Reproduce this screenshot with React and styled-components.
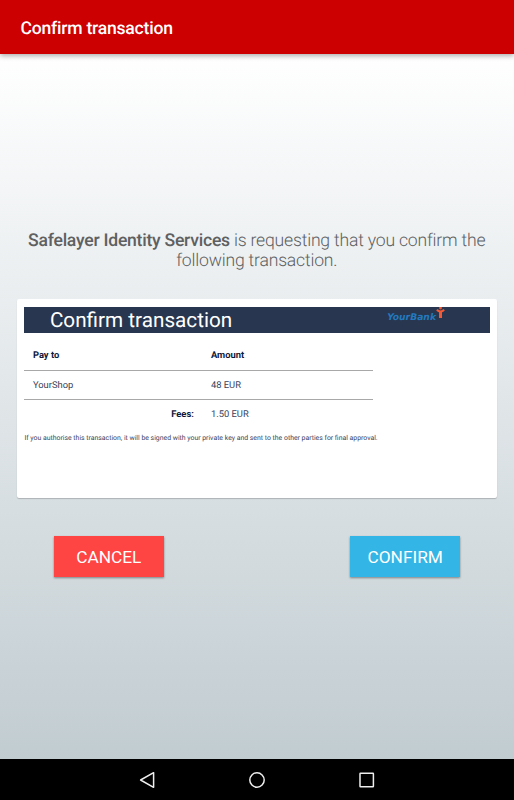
import React from 'react';
import styled, { createGlobalStyle } from 'styled-components';

const GlobalStyle = createGlobalStyle`
  * { box-sizing: border-box; }
  body { margin: 0; font-family: Roboto, sans-serif; text-rendering: geometricPrecision; }
`;

const Screen = styled.div`
  display: flex;
  flex-direction: column;
  width: 514px;
  height: 800px;
  overflow: hidden;
`;

const AppBar = styled.header`
  display: flex;
  align-items: center;
  flex: 0 0 54px;
  padding: 3px 20.5px 0;
  background: #cc0000;
  color: #fff;
  box-shadow: 0 2px 5px rgba(0, 0, 0, 0.32);
  z-index: 1;
`;

const AppTitle = styled.h1`
  margin: 0;
  font-size: 17.6px;
  font-weight: 500;
  line-height: 24px;
  letter-spacing: -0.24px;
`;

const Content = styled.main`
  display: flex;
  flex-direction: column;
  flex: 1;
  padding: 177px 17px 0 16.5px;
  background: linear-gradient(180deg, #ffffff 0%, #c1ccd1 100%);
`;

const Message = styled.p`
  margin: 0;
  text-align: center;
  font-size: 17.6px;
  font-weight: 300;
  line-height: 20px;
  letter-spacing: -0.2px;
  color: #5c6062;
  white-space: nowrap;

  strong { font-weight: 500; color: #5e6061; letter-spacing: -0.25px; }
`;

const Card = styled.section`
  height: 199px;
  margin-top: 28px;
  padding: 8px 7px 0 7.9px;
  border-radius: 2px;
  background: #fff;
  box-shadow: 0 1px 1px rgba(0, 0, 0, 0.2);
`;

const CardHeader = styled.div`
  display: flex;
  justify-content: space-between;
  height: 26px;
  padding: 0 45px 0 25.5px;
  background: #28374f;
  color: #fff;
`;

const CardTitle = styled.h2`
  margin: 0;
  font-size: 20.7px;
  font-weight: 400;
  line-height: 28px;
`;

const Logo = styled.div`
  display: flex;
  align-items: flex-start;
  height: 16px;
`;

const LogoName = styled.span`
  margin-top: 5px;
  font-family: 'DejaVu Sans', sans-serif;
  font-size: 9.2px;
  font-weight: 700;
  font-style: italic;
  line-height: 12px;
  color: #2379bf;
`;

const Table = styled.table`
  width: 349px;
  border-collapse: collapse;
  table-layout: fixed;
  margin-top: 8px;
  font-size: 9.4px;
  color: #39425a;
`;

const Row = styled.tr`
  height: 29px;
  border-bottom: ${({ $ruled }) => ($ruled ? '1px solid #a8a8a8' : 'none')};
`;

const Cell = styled.td`
  width: ${({ $width }) => $width || 'auto'};
  padding: 2px 8.5px 0;
  text-align: ${({ $align }) => $align || 'left'};
  font-weight: ${({ $strong }) => ($strong ? 700 : 400)};
  color: ${({ $strong }) => ($strong ? '#10183a' : 'inherit')};
  line-height: 12px;
`;

const Note = styled.p`
  margin: 5px 0 0;
  font-size: 6.88px;
  line-height: 10px;
  color: #39425a;
  white-space: nowrap;
`;

const Actions = styled.div`
  display: flex;
  justify-content: space-between;
  padding: 0 37px 0 37.5px;
  margin-top: 38px;
`;

const ActionButton = styled.button`
  width: 109.6px;
  height: 41px;
  padding: 1px 0 0;
  border: 0;
  background: ${({ $color }) => $color};
  color: #fff;
  font: 400 17.3px/24px Roboto, sans-serif;
  box-shadow: 0 1px 2px rgba(0, 0, 0, 0.4);
`;

const NavBar = styled.nav`
  display: flex;
  justify-content: center;
  align-items: center;
  gap: 86px;
  flex: 0 0 41px;
  background: #000;
`;

const NavIcon = styled.svg`
  width: 24px;
  height: 24px;
  fill: none;
  stroke: #eee;
  stroke-width: 1.5;
  stroke-linejoin: round;
`;

const LogoFigure = () => (
  <svg width="9" height="12" viewBox="0 0 9 12">
    <circle cx="4.5" cy="1" r="1.4" fill="#f15a35" />
    <path d="M0.9 2.6 Q2.2 4.4 4.5 4.4 Q6.8 4.4 8.1 2.6" fill="none" stroke="#f15a35" strokeWidth="2" />
    <path d="M3 4H6V11H3Z" fill="#f15a35" />
  </svg>
);

export default function App() {
  return (
    <Screen>
      <GlobalStyle />
      <AppBar><AppTitle>Confirm transaction</AppTitle></AppBar>
      <Content>
        <Message>
          <strong>Safelayer Identity Services</strong> is requesting that you confirm the<br />
          following transaction.
        </Message>
        <Card>
          <CardHeader>
            <CardTitle>Confirm transaction</CardTitle>
            <Logo><LogoName>YourBank</LogoName><LogoFigure /></Logo>
          </CardHeader>
          <Table>
            <tbody>
              <Row $ruled>
                <Cell $strong $width="178px">Pay to</Cell>
                <Cell $strong>Amount</Cell>
              </Row>
              <Row $ruled>
                <Cell>YourShop</Cell>
                <Cell>48 EUR</Cell>
              </Row>
              <Row>
                <Cell $strong $align="right">Fees:</Cell>
                <Cell>1.50 EUR</Cell>
              </Row>
            </tbody>
          </Table>
          <Note>If you authorise this transaction, it will be signed with your private key and sent to the other parties for final approval.</Note>
        </Card>
        <Actions>
          <ActionButton $color="#ff4444">CANCEL</ActionButton>
          <ActionButton $color="#33b5e5">CONFIRM</ActionButton>
        </Actions>
      </Content>
      <NavBar>
        <NavIcon viewBox="0 0 24 24"><path d="M5.6 12 18.6 4.7V19.3Z" /></NavIcon>
        <NavIcon viewBox="0 0 24 24"><circle cx="12" cy="12" r="7.2" /></NavIcon>
        <NavIcon viewBox="0 0 24 24"><rect x="5" y="5.3" width="13.4" height="13.4" rx="0.5" /></NavIcon>
      </NavBar>
    </Screen>
  );
}
